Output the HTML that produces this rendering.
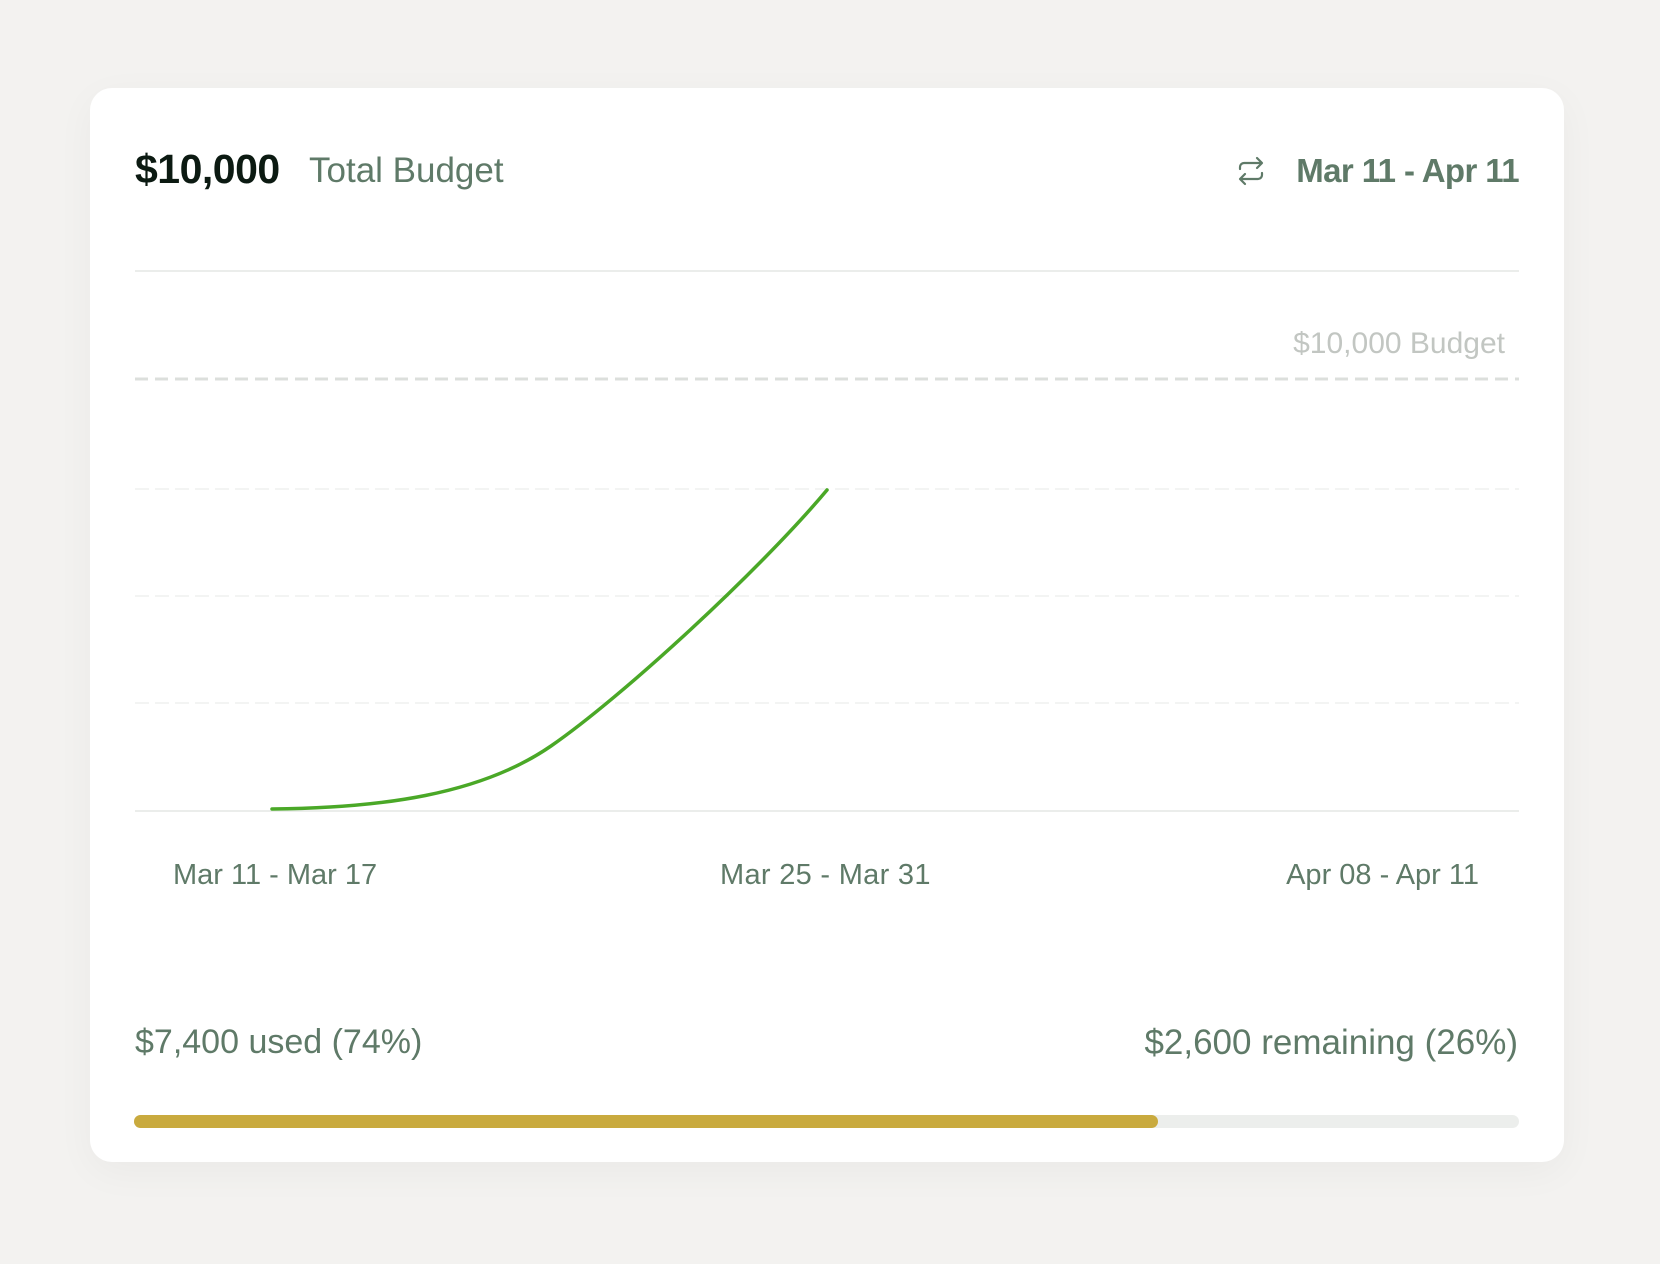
<!DOCTYPE html>
<html><head><meta charset="utf-8"><style>
html,body{margin:0;padding:0;width:1660px;height:1264px;background:#f3f2f0;overflow:hidden;font-family:"Liberation Sans",sans-serif}
.card{position:absolute;left:90px;top:88px;width:1474px;height:1074px;background:#fff;border-radius:22px;box-shadow:0 10px 40px rgba(0,0,0,0.04)}
.t{position:absolute;white-space:nowrap;color:#5f7a68;line-height:1}
</style></head><body>
<div class="card"></div>
<div class="t" style="left:135px;top:149px;font-size:41px;font-weight:bold;color:#0c1a12;letter-spacing:-0.5px">$10,000</div>
<div class="t" style="left:309px;top:153px;font-size:35px">Total Budget</div>
<svg style="position:absolute;left:1235px;top:155px" width="32" height="32" viewBox="0 0 32 32" fill="none" stroke="#5f7a68" stroke-width="2.2" stroke-linecap="round" stroke-linejoin="round"><path d="M5 14v-2a4 4 0 0 1 4-4h17M22 3l5 5-5 5"/><path d="M27 18v2a4 4 0 0 1-4 4H6M10 29l-5-5 5-5"/></svg>
<div class="t" style="right:141px;top:154px;font-size:33px;font-weight:bold;color:#5f7a68;letter-spacing:-0.6px">Mar 11 - Apr 11</div>
<svg style="position:absolute;left:0;top:0" width="1660" height="1264">
<line x1="135" y1="271" x2="1519" y2="271" stroke="#ebedeb" stroke-width="2"/>
<line x1="135" y1="379" x2="1519" y2="379" stroke="#dcdfdc" stroke-width="3" stroke-dasharray="13 7"/>
<line x1="135" y1="489" x2="1519" y2="489" stroke="#f3f4f3" stroke-width="2" stroke-dasharray="14 6"/>
<line x1="135" y1="596" x2="1519" y2="596" stroke="#f3f4f3" stroke-width="2" stroke-dasharray="14 6"/>
<line x1="135" y1="703" x2="1519" y2="703" stroke="#f3f4f3" stroke-width="2" stroke-dasharray="14 6"/>
<line x1="135" y1="811" x2="1519" y2="811" stroke="#ebedeb" stroke-width="2"/>
<path d="M272 809 C 380 808, 480 795, 551 746 S 760 570, 827 490" stroke="#4aa827" stroke-width="3.5" fill="none" stroke-linecap="round"/>
<rect x="134" y="1115" width="1385" height="13" rx="6.5" fill="#eceeec"/>
<rect x="134" y="1115" width="1024" height="13" rx="6.5" fill="#c9aa3e"/>
</svg>
<div class="t" style="right:155px;top:329px;font-size:30px;color:#c2c6c2">$10,000 Budget</div>
<div class="t" style="left:173px;top:861px;font-size:29px">Mar 11 - Mar 17</div>
<div class="t" style="left:720px;top:861px;font-size:29px;letter-spacing:0.3px">Mar 25 - Mar 31</div>
<div class="t" style="right:181px;top:861px;font-size:29px">Apr 08 - Apr 11</div>
<div class="t" style="left:135px;top:1025px;font-size:34px">$7,400 used (74%)</div>
<div class="t" style="right:142px;top:1025px;font-size:35px">$2,600 remaining (26%)</div>
</body></html>
